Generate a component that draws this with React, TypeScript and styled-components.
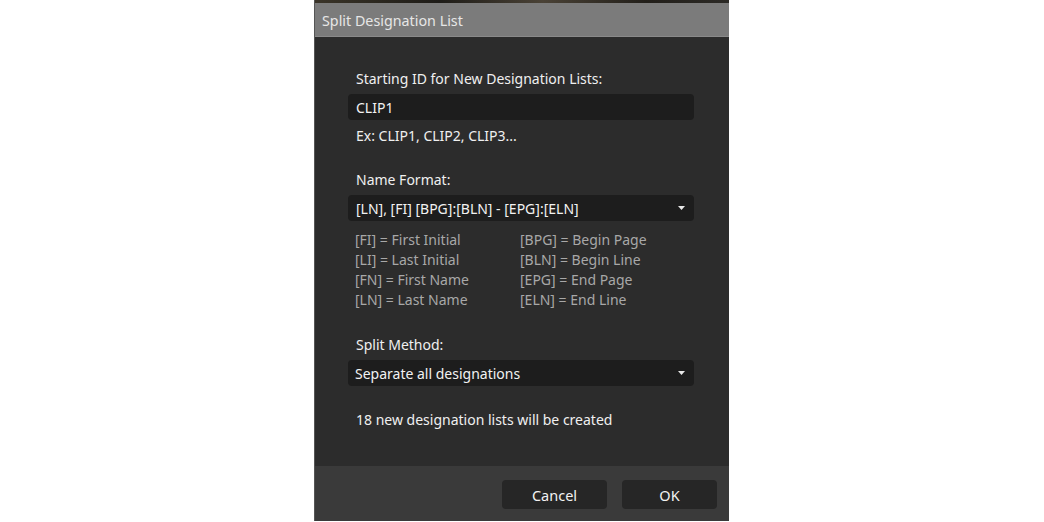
import React from "react";
import styled, { createGlobalStyle } from "styled-components";

const Global = createGlobalStyle`
  html, body { margin: 0; padding: 0; background: #ffffff; }
  body { font-family: "Noto Sans", "Open Sans", sans-serif; }
  #root { width: 1044px; height: 522px; }
`;

const Page = styled.div`
  width: 1044px;
  height: 522px;
  display: flex;
  justify-content: flex-start;
  padding-left: 314px;
  box-sizing: border-box;
`;

const Dialog = styled.div`
  width: 415px;
  height: 521px;
  display: flex;
  flex-direction: column;
  background: #2c2c2c;
  border-left: 1px solid #555;
  box-sizing: border-box;
`;

const TopStrip = styled.div`
  height: 3px;
  background: linear-gradient(90deg, #3a3428 0%, #1e1c18 30%, #4a4236 55%, #221f1a 80%, #2c2a26 100%);
`;

const TitleBar = styled.div`
  height: 34px;
  background: #7b7b7b;
  border-bottom: 1px solid #8a8a8a;
  display: flex;
  align-items: center;
  padding: 2px 0 0 7px;
  color: #e6e6e6;
  font-size: 14.3px;
  box-sizing: border-box;
`;

const Body = styled.div`
  flex: 1;
  padding: 30px 35px 0 33px;
  display: flex;
  flex-direction: column;
  color: #f0f0f0;
  font-size: 14px;
`;

const Label = styled.div<{ $mt?: number }>`
  padding-left: 8px;
  height: 24px;
  line-height: 24px;
  margin-top: ${(p) => p.$mt ?? 0}px;
`;

const Field = styled.div<{ $mt?: number; $pl?: number }>`
  height: 26px;
  margin-top: ${(p) => p.$mt ?? 0}px;
  background: #1d1d1d;
  border-radius: 4px;
  display: flex;
  align-items: center;
  padding-left: ${(p) => p.$pl ?? 8}px;
  padding-right: 9px;
  color: #f2f2f2;
  font-size: 14px;
  box-sizing: border-box;
`;

const FieldText = styled.span`
  flex: 1;
`;

const Caret = styled.svg`
  width: 7px;
  height: 4px;
`;

const Legend = styled.div`
  margin-top: 9px;
  padding-left: 7px;
  display: grid;
  grid-template-columns: 165px auto;
  grid-auto-rows: 20px;
  color: #a8a8a8;
  font-size: 14px;
  line-height: 20px;
`;

const Footer = styled.div`
  height: 55px;
  background: #3a3a3a;
  display: flex;
  justify-content: flex-end;
  align-items: flex-start;
  gap: 15px;
  padding: 14px 12px 0 0;
  box-sizing: border-box;
`;

const Button = styled.button<{ $w: number }>`
  width: ${(p) => p.$w}px;
  height: 29px;
  background: #262626;
  border: none;
  border-radius: 4px;
  color: #f2f2f2;
  font-family: "Noto Sans", "Open Sans", sans-serif;
  font-size: 14.5px;
  padding: 0;
`;

const Arrow = () => (
  <Caret viewBox="0 0 7 4">
    <path d="M0 0 H7 L3.5 4 Z" fill="#e8e8e8" />
  </Caret>
);

export default function App() {
  return (
    <>
      <Global />
      <Page>
        <Dialog>
          <TopStrip />
          <TitleBar>Split Designation List</TitleBar>
          <Body>
            <Label>Starting ID for New Designation Lists:</Label>
            <Field $mt={3}>
              <FieldText>CLIP1</FieldText>
            </Field>
            <Label $mt={4}>Ex: CLIP1, CLIP2, CLIP3...</Label>
            <Label $mt={20}>Name Format:</Label>
            <Field $mt={3}>
              <FieldText>[LN], [FI] [BPG]:[BLN] - [EPG]:[ELN]</FieldText>
              <Arrow />
            </Field>
            <Legend>
              <span>[FI] = First Initial</span>
              <span>[BPG] = Begin Page</span>
              <span>[LI] = Last Initial</span>
              <span>[BLN] = Begin Line</span>
              <span>[FN] = First Name</span>
              <span>[EPG] = End Page</span>
              <span>[LN] = Last Name</span>
              <span>[ELN] = End Line</span>
            </Legend>
            <Label $mt={23}>Split Method:</Label>
            <Field $mt={3} $pl={7}>
              <FieldText>Separate all designations</FieldText>
              <Arrow />
            </Field>
            <Label $mt={22}>18 new designation lists will be created</Label>
          </Body>
          <Footer>
            <Button $w={105}>Cancel</Button>
            <Button $w={95}>OK</Button>
          </Footer>
        </Dialog>
      </Page>
    </>
  );
}
